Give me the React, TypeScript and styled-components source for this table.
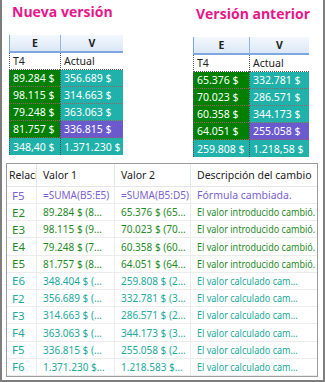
import React from "react";
import styled, { createGlobalStyle } from "styled-components";

type Tone = "green" | "teal" | "purple";

type SheetRow = { e: string; v: string; eTone: Tone; vTone: Tone };

type Sheet = { title: string; eWidth: number; vWidth: number; shift: number; rows: SheetRow[] };

const newer: Sheet = {
  title: "Nueva versión",
  eWidth: 51,
  vWidth: 63,
  shift: 0,
  rows: [
    { e: "89.284 $", v: "356.689 $", eTone: "green", vTone: "teal" },
    { e: "98.115 $", v: "314.663 $", eTone: "green", vTone: "teal" },
    { e: "79.248 $", v: "363.063 $", eTone: "green", vTone: "teal" },
    { e: "81.757 $", v: "336.815 $", eTone: "green", vTone: "purple" },
    { e: "348,40 $", v: "1.371.230 $", eTone: "teal", vTone: "teal" },
  ],
};

const older: Sheet = {
  title: "Versión anterior",
  eWidth: 56,
  vWidth: 60,
  shift: 2,
  rows: [
    { e: "65.376 $", v: "332.781 $", eTone: "green", vTone: "teal" },
    { e: "70.023 $", v: "286.571 $", eTone: "green", vTone: "teal" },
    { e: "60.358 $", v: "344.173 $", eTone: "green", vTone: "teal" },
    { e: "64.051 $", v: "255.058 $", eTone: "green", vTone: "purple" },
    { e: "259.808 $", v: "1.218,58 $", eTone: "teal", vTone: "teal" },
  ],
};

type ChangeRow = { cell: string; v1: string; v2: string; desc: string; tone: Tone };

const changes: ChangeRow[] = [
  { cell: "F5", v1: "=SUMA(B5:E5)", v2: "=SUMA(B5:D5)", desc: "Fórmula cambiada.", tone: "purple" },
  { cell: "E2", v1: "89.284 $ (8…", v2: "65.376 $ (65…", desc: "El valor introducido cambió.", tone: "green" },
  { cell: "E3", v1: "98.115 $ (9…", v2: "70.023 $ (70…", desc: "El valor introducido cambió.", tone: "green" },
  { cell: "E4", v1: "79.248 $ (7…", v2: "60.358 $ (60…", desc: "El valor introducido cambió.", tone: "green" },
  { cell: "E5", v1: "81.757 $ (8…", v2: "64.051 $ (64…", desc: "El valor introducido cambió.", tone: "green" },
  { cell: "E6", v1: "348.404 $ (…", v2: "259.808 $ (2…", desc: "El valor calculado cam…", tone: "teal" },
  { cell: "F2", v1: "356.689 $ (…", v2: "332.781 $ (3…", desc: "El valor calculado cam…", tone: "teal" },
  { cell: "F3", v1: "314.663 $ (…", v2: "286.571 $ (2…", desc: "El valor calculado cam…", tone: "teal" },
  { cell: "F4", v1: "363.063 $ (…", v2: "344.173 $ (3…", desc: "El valor calculado cam…", tone: "teal" },
  { cell: "F5", v1: "336.815 $ (…", v2: "255.058 $ (2…", desc: "El valor calculado cam…", tone: "teal" },
  { cell: "F6", v1: "1.371.230 $…", v2: "1.218.583 $…", desc: "El valor calculado cam…", tone: "teal" },
];

const fill: Record<Tone, string> = {
  green: "#007f00",
  teal: "#20b2aa",
  purple: "#6a5acd",
};

const ink: Record<Tone, string> = {
  green: "#1f8a1f",
  teal: "#22a99c",
  purple: "#7a5fd6",
};

const GlobalStyle = createGlobalStyle`
  html, body {
    margin: 0;
    padding: 0;
    background: #ffffff;
  }
  body {
    font-family: "Noto Sans", "Open Sans", sans-serif;
  }
`;

export default function App() {
  return (
    <>
      <GlobalStyle />
      <Frame>
        <Versions>
          <SheetView sheet={newer} />
          <SheetView sheet={older} />
        </Versions>
        <Changes>
          <HeadRow>
            <HeadCell $first>Relaci</HeadCell>
            <HeadCell>Valor 1</HeadCell>
            <HeadCell>Valor 2</HeadCell>
            <HeadCell $last>Descripción del cambio</HeadCell>
          </HeadRow>
          {changes.map((c, i) => (
            <ChangeLine key={i} $tone={c.tone}>
              <RefCell>{c.cell}</RefCell>
              <ValueCell>{c.v1}</ValueCell>
              <ValueCell>{c.v2}</ValueCell>
              <DescCell>
                <Narrow $squeeze={c.tone !== "purple"}>{c.desc}</Narrow>
              </DescCell>
            </ChangeLine>
          ))}
        </Changes>
      </Frame>
    </>
  );
}

const SheetView: React.FC<{ sheet: Sheet }> = ({ sheet }) => (
  <Panel $shift={sheet.shift}>
    <Title>{sheet.title}</Title>
    <Grid $e={sheet.eWidth} $v={sheet.vWidth}>
      <ColHead $first>E</ColHead>
      <ColHead>V</ColHead>
      <LabelCell $first>T4</LabelCell>
      <LabelCell>Actual</LabelCell>
      {sheet.rows.map((r, i) => (
        <React.Fragment key={i}>
          <DataCell $tone={r.eTone} $first $last={i === sheet.rows.length - 1}>
            {r.e}
          </DataCell>
          <DataCell $tone={r.vTone} $last={i === sheet.rows.length - 1}>
            {r.v}
          </DataCell>
        </React.Fragment>
      ))}
    </Grid>
  </Panel>
);

// Styled components
const Frame = styled.div`
  width: 325px;
  height: 382px;
  box-sizing: border-box;
  border-left: 2px solid #7d7d7d;
  border-right: 2px solid #7d7d7d;
  border-bottom: 2px solid #7d7d7d;
  display: flex;
  flex-direction: column;
  overflow: hidden;
`;

const Versions = styled.div`
  display: flex;
  gap: 70px;
  padding-left: 7px;
  height: 161px;
`;

const Panel = styled.div<{ $shift: number }>`
  display: flex;
  flex-direction: column;
  padding-top: ${(p) => p.$shift}px;
`;

const Title = styled.div`
  color: #e8168a;
  font-family: "Open Sans", "Noto Sans", sans-serif;
  font-weight: 700;
  font-size: 14px;
  line-height: 18px;
  margin: 3px 0 0 3px;
  height: 32px;
  white-space: nowrap;
`;

const Grid = styled.div<{ $e: number; $v: number }>`
  display: grid;
  grid-template-columns: ${(p) => p.$e}px ${(p) => p.$v}px;
  grid-auto-rows: 17px;
  grid-template-rows: 18px;
  font-size: 10.5px;
`;

const ColHead = styled.div<{ $first?: boolean }>`
  display: flex;
  align-items: center;
  justify-content: center;
  font-weight: 700;
  color: #222;
  background: linear-gradient(#f4f8fd, #dbe7f6);
  border-bottom: 2px solid #7ea7dd;
  border-left: 1px solid ${(p) => (p.$first ? "#7ea7dd" : "#93b5e3")};
`;

const LabelCell = styled.div<{ $first?: boolean }>`
  display: flex;
  align-items: center;
  padding-left: 3px;
  color: #222;
  background: #ffffff;
  border-left: 1px dotted #555;
  border-bottom: 1px dotted #555;
`;

const DataCell = styled.div<{ $tone: Tone; $first?: boolean; $last?: boolean }>`
  display: flex;
  align-items: center;
  padding-left: 3px;
  color: #ffffff;
  white-space: nowrap;
  overflow: hidden;
  background: ${(p) => fill[p.$tone]};
  border-left: 1px dotted ${(p) => (p.$first ? "#555" : "#4a4a4a")};
  border-bottom: ${(p) => (p.$last ? "none" : "1px dotted #9a6060")};
`;

const Changes = styled.div`
  margin: 2px 5px 3px 4px;
  border: 1px solid #9c9c9c;
  flex: 1;
  display: flex;
  flex-direction: column;
  font-family: "Noto Sans", sans-serif;
  font-size: 10.5px;
  overflow: hidden;
`;

const HeadRow = styled.div`
  display: grid;
  grid-template-columns: 30px 78px 76px 1fr;
  height: 23px;
  border-bottom: 1px solid #e6e6e6;
`;

const HeadCell = styled.div<{ $first?: boolean; $last?: boolean }>`
  display: flex;
  align-items: center;
  padding-left: ${(p) => (p.$first ? 2 : 6)}px;
  color: #222;
  white-space: nowrap;
  overflow: hidden;
  border-right: ${(p) => (p.$last ? "none" : "1px solid #e3e8ef")};
`;

const ChangeLine = styled.div<{ $tone: Tone }>`
  display: grid;
  grid-template-columns: 30px 78px 76px 1fr;
  height: 17px;
  border-bottom: 1px solid #ececec;
  color: ${(p) => ink[p.$tone]};
`;

const RefCell = styled.div`
  display: flex;
  align-items: center;
  padding-left: 5px;
  border-right: 1px solid #ececec;
  font-size: 11.5px;
`;

const ValueCell = styled.div`
  display: flex;
  align-items: center;
  padding-left: 6px;
  font-size: 10px;
  white-space: nowrap;
  overflow: hidden;
  border-right: 1px solid #ececec;
`;

const DescCell = styled.div`
  display: flex;
  align-items: center;
  padding-left: 6px;
  white-space: nowrap;
  overflow: hidden;
`;

const Narrow = styled.span<{ $squeeze: boolean }>`
  display: inline-block;
  transform-origin: left center;
  transform: ${(p) => (p.$squeeze ? "scaleX(0.86)" : "none")};
`;
